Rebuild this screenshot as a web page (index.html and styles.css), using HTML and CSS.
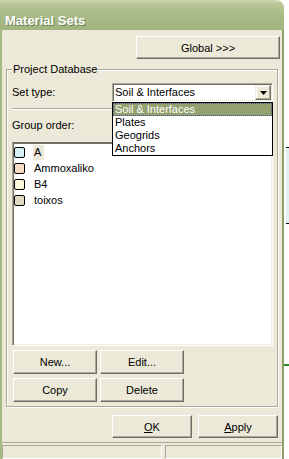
FILE: index.html
```html
<!DOCTYPE html>
<html lang="en">
  <head>
    <meta charset="UTF-8" />
    <meta name="viewport" content="width=device-width, initial-scale=1.0" />
    <title>Material Sets</title>
    <link rel="stylesheet" href="styles.css">
  </head>
  <body>
    <div class="window">
      <div class="titlebar">
        <span class="title">Material Sets</span>
      </div>
      <div class="frame">
        <div class="client">
          <div class="top-row">
            <button class="btn btn-global">Global &gt;&gt;&gt;</button>
          </div>

          <div class="group">
            <span class="legend">Project Database</span>

            <div class="set-type">
              <span class="set-label">Set type:</span>
              <div class="combo">
                <span class="combo-text">Soil &amp; Interfaces</span>
                <span class="combo-arrow">
                  <svg width="7" height="4" viewBox="0 0 7 4">
                    <path d="M0 0h7L3.5 4z" fill="#000" />
                  </svg>
                </span>
                <!-- open drop-down list -->
                <ul class="dropdown">
                  <li class="selected">Soil &amp; Interfaces</li>
                  <li>Plates</li>
                  <li>Geogrids</li>
                  <li>Anchors</li>
                </ul>
              </div>
            </div>

            <div class="separator"></div>

            <div class="group-label">Group order:</div>

            <ul class="list">
              <li><span class="swatch swatch-a"></span><span class="item-text current">A</span></li>
              <li><span class="swatch swatch-ammo"></span><span class="item-text">Ammoxaliko</span></li>
              <li><span class="swatch swatch-b4"></span><span class="item-text">B4</span></li>
              <li><span class="swatch swatch-toixos"></span><span class="item-text">toixos</span></li>
            </ul>

            <div class="btn-grid">
              <button class="btn">New...</button>
              <button class="btn">Edit...</button>
              <button class="btn">Copy</button>
              <button class="btn">Delete</button>
            </div>
          </div>

          <div class="dialog-buttons">
            <button class="btn btn-dialog"><u>O</u>K</button>
            <button class="btn btn-dialog"><u>A</u>pply</button>
          </div>
        </div>

        <div class="statusbar">
          <div class="panel panel-left"></div>
          <div class="panel panel-right"></div>
        </div>
      </div>
    </div>

    <!-- bits of the window behind -->
    <div class="behind-box"></div>
    <div class="behind-line"></div>
  </body>
</html>
```

FILE: styles.css
```css
body {
  margin: 0;
  background-color: #fff;
  font-family: "Liberation Sans", Arial, sans-serif;
  font-size: 11px;
  color: #000;
}
.window {
  display: flex;
  flex-direction: column;
  width: 284px;
  height: 459px;
  border-top-right-radius: 8px;
  overflow: hidden;
  background-color: #ece9d8;
}
.titlebar {
  box-sizing: border-box;
  height: 30px;
  padding: 13px 0 0 5px;
  background: linear-gradient(to bottom, #d0dab3 0, #b6c694 4px, #abbc89 45%, #a2b480 100%);
}
.title {
  display: block;
  line-height: 15px;
  font-size: 13px;
  font-weight: bold;
  color: #fff;
  text-shadow: 1px 1px 0 #6f7f50;
}
.frame {
  flex: 1;
  display: flex;
  flex-direction: column;
  border-left: 2px solid #a6b884;
  border-right: 2px solid #8c9d6c;
}
.client {
  padding: 6px 2px 0 4px;
}
.top-row {
  display: flex;
  justify-content: flex-end;
}
/* classic 3D push button */
.btn {
  box-sizing: border-box;
  height: 24px;
  padding: 0;
  margin: 0;
  font-family: "Liberation Sans", Arial, sans-serif;
  font-size: 11px;
  color: #000;
  background-color: #ece9d8;
  border: 1px solid;
  border-color: #fff #716f64 #716f64 #fff;
  box-shadow: inset -1px -1px 0 #aca899;
  border-radius: 0;
}
.btn-global {
  width: 144px;
  height: 23px;
}
/* etched group box */
.group {
  position: relative;
  margin: 10px 2px 0 0;
  padding: 13px 4px 4px 5px;
  border: 1px solid #aca899;
  box-shadow: inset 1px 1px 0 #fff, 1px 1px 0 #fff;
}
.legend {
  position: absolute;
  top: -7px;
  left: 5px;
  padding: 0 1px;
  line-height: 13px;
  background-color: #ece9d8;
}
.set-type {
  display: flex;
  align-items: center;
  height: 19px;
}
.set-label {
  flex: 0 0 100px;
  line-height: 13px;
}
.combo {
  position: relative;
  flex: 1;
  box-sizing: border-box;
  display: flex;
  align-items: center;
  height: 19px;
  background-color: #fff;
  border: 1px solid;
  border-color: #aca899 #fff #fff #aca899;
  box-shadow: inset 1px 1px 0 #716f64, inset -1px -1px 0 #f1efe2;
  padding: 1px 1px 1px 2px;
}
.combo-text {
  flex: 1;
  line-height: 13px;
}
.combo-arrow {
  box-sizing: border-box;
  display: flex;
  align-items: center;
  justify-content: center;
  width: 16px;
  height: 15px;
  background-color: #ece9d8;
  border: 1px solid;
  border-color: #f1efe2 #716f64 #716f64 #f1efe2;
  box-shadow: inset -1px -1px 0 #aca899, inset 1px 1px 0 #fff;
}
.dropdown {
  position: absolute;
  top: calc(100% + 1px);
  left: -1px;
  right: -1px;
  margin: 0;
  padding: 0;
  list-style: none;
  background-color: #fff;
  border: 1px solid #000;
  z-index: 2;
}
.dropdown li {
  box-sizing: border-box;
  height: 13px;
  line-height: 13px;
  padding-left: 2px;
}
.dropdown .selected {
  background-color: #93a070;
  color: #fff;
  outline: 1px dotted #4a4f8a;
  outline-offset: -1px;
}
.separator {
  margin-top: 6px;
  border-top: 1px solid #aca899;
  border-bottom: 1px solid #fff;
}
.group-label {
  margin-top: 9px;
  line-height: 13px;
}
/* sunken list box */
.list {
  box-sizing: border-box;
  height: 204px;
  margin: 10px 0 0;
  padding: 1px 0 0 1px;
  list-style: none;
  background-color: #fff;
  border: 1px solid;
  border-color: #716f64 #fff #fff #aca899;
  box-shadow: inset 1px 1px 0 #716f64, inset -1px -1px 0 #f1efe2;
}
.list li {
  display: flex;
  align-items: center;
  height: 16px;
}
.swatch {
  box-sizing: border-box;
  width: 11px;
  height: 11px;
  border: 1px solid #000;
  border-radius: 2px;
  margin-right: 8px;
}
.swatch-a {
  background-color: #d6eff5;
}
.swatch-ammo {
  background-color: #f7dcc6;
}
.swatch-b4 {
  background-color: #fbfadd;
}
.swatch-toixos {
  background-color: #e2d9c1;
}
.item-text {
  padding: 1px;
  line-height: 13px;
}
.item-text.current {
  padding-right: 3px;
  background-color: #ece9d8;
}
.btn-grid {
  display: grid;
  grid-template-columns: 84px 84px;
  column-gap: 3px;
  row-gap: 4px;
  margin-top: 4px;
  padding-left: 1px;
}
.dialog-buttons {
  display: flex;
  justify-content: flex-end;
  gap: 6px;
  margin: 8px 2px 0 0;
}
.btn-dialog {
  width: 80px;
  height: 23px;
}
.statusbar {
  flex: 1;
  display: flex;
  gap: 3px;
  margin-top: 4px;
  padding-top: 2px;
  border-top: 1px solid #aca899;
}
.panel {
  border: 1px solid;
  border-color: #aca899 #fff #fff #aca899;
}
.panel-left {
  width: 158px;
}
.panel-right {
  flex: 1;
}
.behind-box {
  position: absolute;
  left: 286px;
  top: 147px;
  width: 10px;
  height: 75px;
  background-color: #dff3f3;
  border-top: 1px solid #000;
  border-bottom: 1px solid #000;
}
.behind-line {
  position: absolute;
  left: 284px;
  top: 364px;
  width: 10px;
  height: 2px;
  background-color: #2d8a2d;
}
```
